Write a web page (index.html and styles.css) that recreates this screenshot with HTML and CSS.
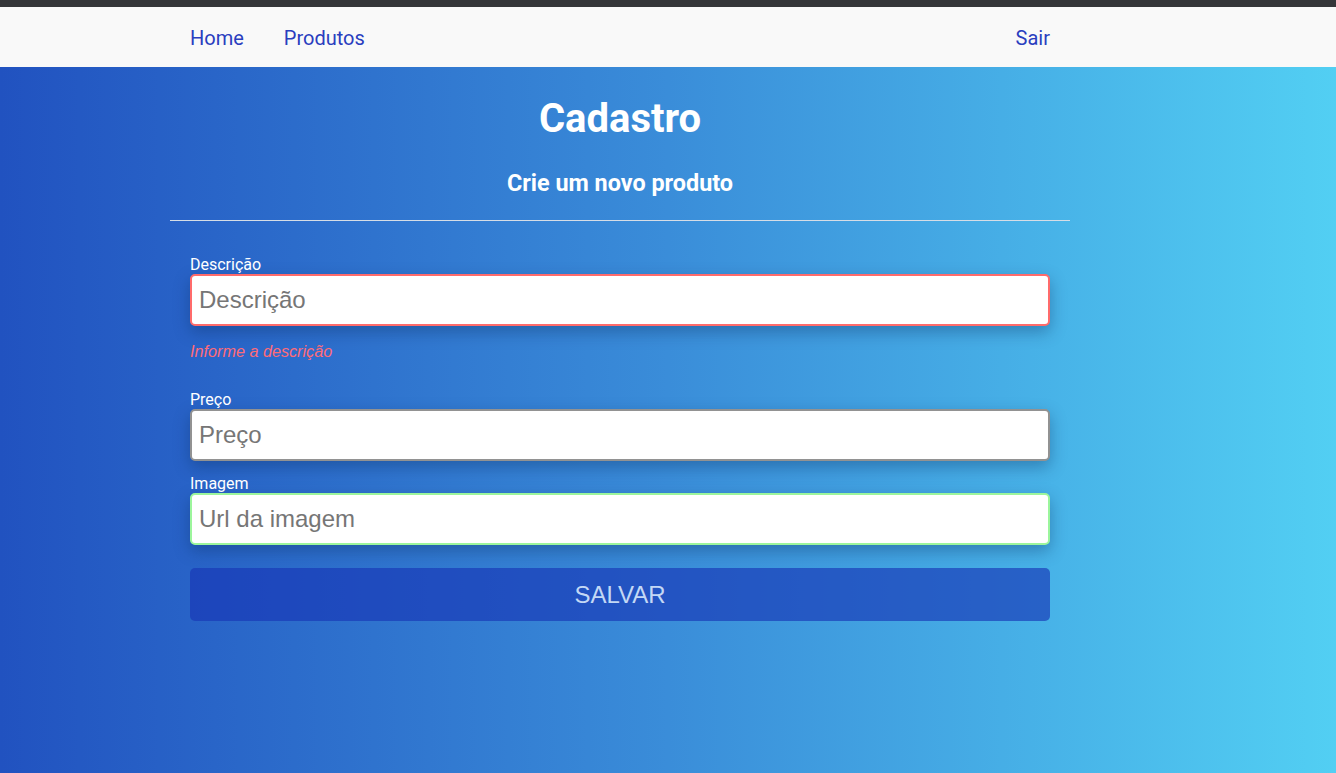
FILE: index.html
```html
<!DOCTYPE html>
<html lang="pt-BR">
<head>
<meta charset="utf-8">
<title>Cadastro</title>
<link rel="stylesheet" href="styles.css">
</head>
<body>
<div class="topbar"></div>
<nav class="navbar">
  <div class="nav-inner">
    <div class="nav-left">
      <a class="nav-link" href="#">Home</a>
      <a class="nav-link" href="#">Produtos</a>
    </div>
    <a class="nav-link" href="#">Sair</a>
  </div>
</nav>
<main class="page">
  <div class="container">
    <h1 class="title">Cadastro</h1>
    <h2 class="subtitle">Crie um novo produto</h2>
    <hr class="divider">
    <form class="form">
      <div class="group group-error">
        <label class="label" for="desc">Descrição</label>
        <input class="input input-invalid" id="desc" type="text" placeholder="Descrição">
        <p class="error">Informe a descrição</p>
      </div>
      <div class="group">
        <label class="label" for="preco">Preço</label>
        <input class="input input-neutral" id="preco" type="text" placeholder="Preço">
      </div>
      <div class="group">
        <label class="label" for="img">Imagem</label>
        <input class="input input-valid" id="img" type="text" placeholder="Url da imagem">
      </div>
      <button class="btn" type="button">SALVAR</button>
    </form>
  </div>
</main>
</body>
</html>
```
FILE: styles.css
```css
* { box-sizing: border-box; }
html, body { margin: 0; padding: 0; height: 100%; }
body {
  font-family: Roboto, "Liberation Sans", sans-serif;
  background: linear-gradient(to right, #2152c0 0%, #3a8dd9 50%, #52cff3 100%);
  min-height: 773px;
}
.topbar { height: 7px; background: #353639; }
.navbar { height: 60px; background: #f9f9f9; }
.nav-inner {
  width: 900px;
  margin-left: 170px;
  height: 100%;
  padding: 0 20px;
  display: flex;
  align-items: center;
  justify-content: space-between;
}
.nav-left { display: flex; gap: 40px; }
.nav-link {
  font-size: 20px;
  color: #2a3ebf;
  text-decoration: none;
  line-height: 23px;
  position: relative;
  top: 1px;
}
.page { display: flex; }
.container { width: 900px; margin-left: 170px; }
.title {
  margin: 28px 0 0;
  text-align: center;
  color: #fff;
  font-size: 40px;
  font-weight: 700;
  line-height: 47px;
}
.subtitle {
  margin: 28px 0 0;
  text-align: center;
  color: #fff;
  font-size: 23.4px;
  font-weight: 700;
  line-height: 27px;
}
.divider {
  margin: 23px 0 0;
  border: 0;
  height: 1px;
  background: #d6dde6;
}
.form { padding: 34px 20px 0; }
.group { margin-bottom: 13px; }
.group-error { margin-bottom: 29px; }
.label {
  display: block;
  color: #fff;
  font-size: 16px;
  line-height: 19px;
}
.input {
  display: block;
  width: 100%;
  height: 52px;
  border: 2px solid #929292;
  border-radius: 5px;
  background: #fff;
  padding: 0 7px;
  font-family: "Liberation Sans", Arial, sans-serif;
  font-size: 24px;
  color: #333;
  box-shadow: 0 6px 16px rgba(10, 40, 90, 0.35);
  outline: none;
}
.input::placeholder { color: #767676; }
.input-invalid { border-color: #ff6b6b; }
.input-neutral { border-color: #929292; }
.input-valid { border-color: #9cf59c; }
.error {
  margin: 16px 0 0;
  color: #ff6b78;
  font-family: "Liberation Sans", Arial, sans-serif;
  font-style: italic;
  font-size: 16.2px;
  line-height: 19px;
}
.btn {
  display: block;
  width: 100%;
  height: 53px;
  margin-top: 23px;
  border: 0;
  border-radius: 5px;
  background: rgba(23, 54, 181, 0.65);
  color: #c3d8f5;
  font-family: "Liberation Sans", Arial, sans-serif;
  font-size: 24px;
  cursor: pointer;
}
```
